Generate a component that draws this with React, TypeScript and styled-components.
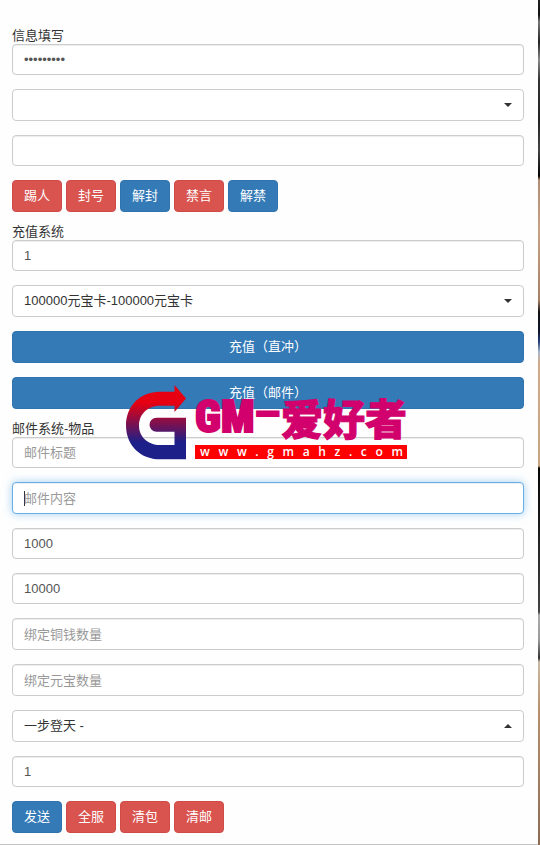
import React from "react";
import styled, { createGlobalStyle, css } from "styled-components";

const GlobalStyle = createGlobalStyle`
  *, *::before, *::after { box-sizing: border-box; }
  body {
    margin: 0;
    background: #fff;
    color: #333;
    font-family: "Liberation Sans", "Noto Sans CJK SC", sans-serif;
    font-size: 13px;
    line-height: 18px;
  }
  button, input, select { font: inherit; margin: 0; }
`;

const Page = styled.div`
  position: relative;
  display: flex;
`;

const Panel = styled.main`
  flex: 1;
  min-width: 0;
  display: flex;
  flex-direction: column;
  gap: 13px;
  padding: 29px 14px 11px 12px;
  background: #fefefe;
  border-bottom: 1px solid #c4c4c4;
`;

const Backdrop = styled.div`
  width: 2px;
  background: linear-gradient(
    #222 0, #111 15px, #777 22px, #222 42px, #888 60px, #333 80px, #222 120px,
    #444 150px, #000 176px, #b08c74 180px, #c9a183 230px, #a97f63 300px,
    #111 312px, #10152e 332px, #26407c 342px, #a9b6cc 352px, #cfa98a 362px,
    #c9a47f 466px, #050505 468px, #222 540px, #444 612px, #aaa 615px,
    #999 640px, #333 658px, #c8b9a2 662px, #b98f6b 710px, #8d6b55 845px
  );
`;

const Group = styled.form`
  display: flex;
  flex-direction: column;
  gap: 14px;
`;

const Field = styled.div`
  display: flex;
  flex-direction: column;
`;

const Caption = styled.label`
  height: 15px;
  line-height: 14px;
`;

const controlBox = css`
  width: 100%;
  padding: 0 11px;
  border: 1px solid #ccc;
  border-radius: 4px;
  background: #fff;
  outline: none;
`;

const TextBox = styled.input<{ $tall?: boolean; $active?: boolean }>`
  ${controlBox}
  height: ${(p) => (p.$tall ? 32 : 31)}px;
  color: #555;
  box-shadow: inset 0 1px 1px rgba(0, 0, 0, 0.075);
  &::placeholder { color: #999; opacity: 1; }
  ${(p) =>
    p.$active &&
    css`
      border-color: #66afe9;
      box-shadow: inset 0 1px 1px rgba(0, 0, 0, 0.075), 0 0 8px rgba(102, 175, 233, 0.6);
      background: linear-gradient(#333, #333) 11px 50% / 1px 15px no-repeat #fff;
      caret-color: transparent;
    `}
`;

const SelectWrap = styled.div`
  position: relative;
  display: flex;
`;

const SelectBox = styled.select`
  ${controlBox}
  height: 32px;
  color: #333;
  appearance: none;
`;

const Caret = styled.svg`
  position: absolute;
  right: 12px;
  top: 50%;
  width: 8px;
  height: 4px;
  margin-top: -2px;
  fill: #333;
  pointer-events: none;
`;

const ButtonRow = styled.div`
  display: flex;
  gap: 4px;
`;

const Button = styled.button<{ $tone: "primary" | "danger"; $block?: boolean }>`
  height: 32px;
  width: ${(p) => (p.$block ? "100%" : "auto")};
  padding: 0 11px;
  border: 1px solid ${(p) => (p.$tone === "primary" ? "#3073ad" : "#d04b47")};
  border-radius: 4px;
  background: ${(p) => (p.$tone === "primary" ? "#337ab7" : "#d9534f")};
  color: #fff;
  cursor: pointer;
`;

const Watermark = styled.div`
  position: absolute;
  top: 385px;
  left: 50%;
  margin-left: -144px;
  display: flex;
  gap: 9px;
  pointer-events: none;
`;

const Emblem = styled.svg`
  width: 60px;
  height: 75px;
`;

const Brand = styled.div`
  display: flex;
  flex-direction: column;
  width: 212px;
  padding-top: 4px;
`;

const BrandName = styled.div`
  display: flex;
  align-items: center;
  justify-content: space-between;
  height: 56px;
  color: #d1006c;
  font-family: "Noto Sans CJK SC", sans-serif;
  font-weight: 900;
  line-height: 56px;
  white-space: nowrap;
`;

const BrandLatin = styled.span`
  font-family: "Roboto Condensed", "Liberation Sans Narrow", "Roboto", sans-serif;
  font-size: 44px;
  -webkit-text-stroke: 2px #d1006c;
`;

const BrandDash = styled.span`
  font-size: 22px;
  line-height: 46px;
  align-self: flex-start;
  -webkit-text-stroke: 3px #d1006c;
`;

const BrandHan = styled.span`
  font-size: 42px;
  line-height: 54px;
  -webkit-text-stroke: 1px #d1006c;
`;

const Address = styled.div`
  display: flex;
  justify-content: space-between;
  height: 14px;
  padding: 0 4px 0 5px;
  background: #f00;
  color: #fff;
  font-family: "Open Sans", sans-serif;
  font-size: 12px;
  font-weight: 600;
  line-height: 13px;
`;

function Dropdown(props: { name: string; label: string; option: string; open?: boolean }) {
  return (
    <SelectWrap>
      <SelectBox name={props.name} aria-label={props.label}>
        <option>{props.option}</option>
      </SelectBox>
      <Caret viewBox="0 0 8 4" aria-hidden="true">
        <path d={props.open ? "M0 4L4 0L8 4Z" : "M0 0H8L4 4Z"} />
      </Caret>
    </SelectWrap>
  );
}

function SiteMark() {
  return (
    <Watermark>
      <Emblem viewBox="0 0 60 75" aria-hidden="true">
        <defs>
          <linearGradient id="emblem" x1="0" y1="0" x2="0" y2="75" gradientUnits="userSpaceOnUse">
            <stop offset="0.24" stopColor="#e60012" />
            <stop offset="0.76" stopColor="#1d2088" />
          </linearGradient>
        </defs>
        <path
          fill="url(#emblem)"
          d="M48.5 0L60 13.5L48.5 27V20.7H34C22 20.7 13 29 13 40.5S22 60 34 60H48.5V46.7H30.5A7 7 0 0 1 30.5 32.7H60V74.3H34C14 74.3 0 60 0 40.5S14 6.7 34 6.7H48.5Z"
        />
      </Emblem>
      <Brand>
        <BrandName>
          <BrandLatin>GM</BrandLatin>
          <BrandDash>一</BrandDash>
          <BrandHan>爱好者</BrandHan>
        </BrandName>
        <Address>
          {"www.gmahz.com".split("").map((letter, i) => (
            <span key={i}>{letter}</span>
          ))}
        </Address>
      </Brand>
    </Watermark>
  );
}

export default function App() {
  return (
    <>
      <GlobalStyle />
      <Page>
        <Panel>
          <Group>
            <Field>
              <Caption htmlFor="password">信息填写</Caption>
              <TextBox id="password" type="password" defaultValue="123456789" autoComplete="off" />
            </Field>
            <Dropdown name="server" label="区服" option="" />
            <TextBox name="role" aria-label="角色" />
            <ButtonRow>
              <Button type="button" $tone="danger">踢人</Button>
              <Button type="button" $tone="danger">封号</Button>
              <Button type="button" $tone="primary">解封</Button>
              <Button type="button" $tone="danger">禁言</Button>
              <Button type="button" $tone="primary">解禁</Button>
            </ButtonRow>
          </Group>

          <Group>
            <Field>
              <Caption htmlFor="charge">充值系统</Caption>
              <TextBox id="charge" defaultValue="1" />
            </Field>
            <Dropdown name="card" label="充值卡" option="100000元宝卡-100000元宝卡" />
            <Button type="button" $tone="primary" $block>充值（直冲）</Button>
            <Button type="button" $tone="primary" $block>充值（邮件）</Button>
          </Group>

          <Group>
            <Field>
              <Caption htmlFor="title">邮件系统-物品</Caption>
              <TextBox id="title" placeholder="邮件标题" />
            </Field>
            <TextBox $tall $active aria-label="邮件内容" placeholder="邮件内容" />
            <TextBox aria-label="铜钱数量" defaultValue="1000" />
            <TextBox aria-label="元宝数量" defaultValue="10000" />
            <TextBox $tall aria-label="绑定铜钱数量" placeholder="绑定铜钱数量" />
            <TextBox $tall aria-label="绑定元宝数量" placeholder="绑定元宝数量" />
            <Dropdown name="item" label="物品" option="一步登天 -" open />
            <TextBox aria-label="物品数量" defaultValue="1" />
            <ButtonRow>
              <Button type="button" $tone="primary">发送</Button>
              <Button type="button" $tone="danger">全服</Button>
              <Button type="button" $tone="danger">清包</Button>
              <Button type="button" $tone="danger">清邮</Button>
            </ButtonRow>
          </Group>
        </Panel>
        <Backdrop />
        <SiteMark />
      </Page>
    </>
  );
}
